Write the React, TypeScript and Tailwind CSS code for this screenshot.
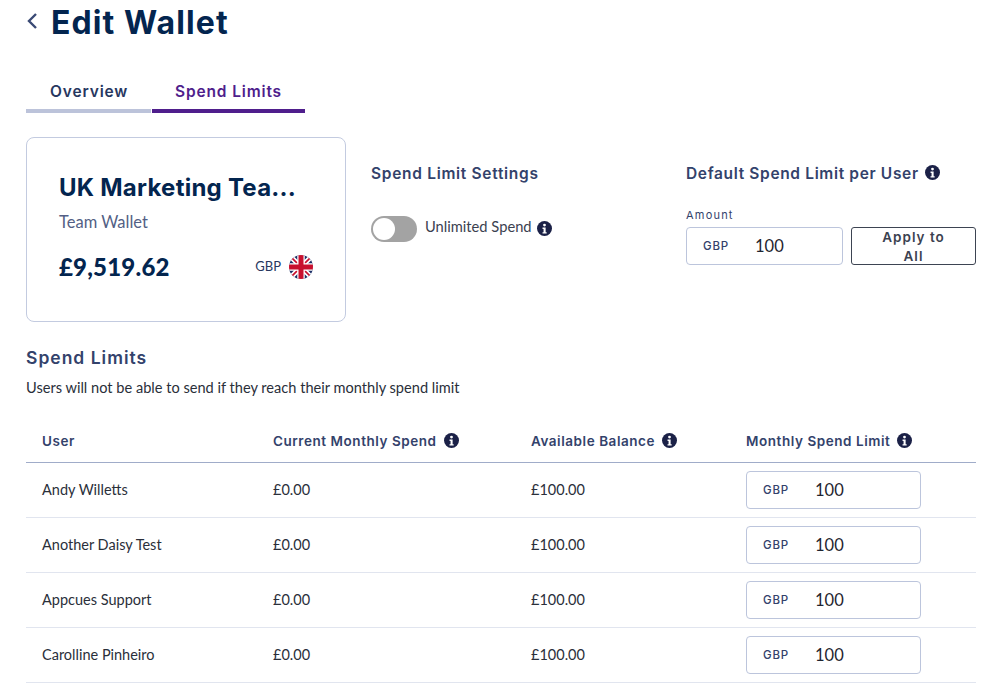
import React from 'react';

const users = ['Andy Willetts', 'Another Daisy Test', 'Appcues Support', 'Carolline Pinheiro'];

const InfoIcon = ({ className }: { className?: string }) => (
  <svg viewBox="0 0 16 16" className={className}>
    <circle cx="8" cy="8" r="8" fill="#1b2147" />
    <circle cx="8" cy="4.3" r="1.5" fill="#fff" />
    <path d="M5.9 7h3.3v5h1.1v1.4H5.9V12H7V8.4H5.9z" fill="#fff" />
  </svg>
);

const UkFlag = () => (
  <svg viewBox="0 0 24 24" className="w-6 h-6">
    <defs>
      <clipPath id="flag-circle">
        <circle cx="12" cy="12" r="12" />
      </clipPath>
    </defs>
    <g clipPath="url(#flag-circle)">
      <rect width="24" height="24" fill="#1c2f66" />
      <path d="M0 0L24 24M24 0L0 24" stroke="#fff" strokeWidth="5" />
      <path d="M0 0L24 24M24 0L0 24" stroke="#c8102e" strokeWidth="1.6" />
      <path d="M12 0V24M0 12H24" stroke="#fff" strokeWidth="7.5" />
      <path d="M12 0V24M0 12H24" stroke="#c8102e" strokeWidth="5" />
    </g>
  </svg>
);

const LimitInput = ({ className, labelClass }: { className: string; labelClass: string }) => (
  <div className={`flex items-center border border-[#bcc5dc] rounded-[4px] bg-white ${className}`}>
    <span className={`pt-[2px] font-['Inter',sans-serif] text-[11.5px] tracking-[0.8px] font-medium text-[#33426b] ${labelClass}`}>GBP</span>
    <span className="text-[16.5px] text-[#1f2530]">100</span>
  </div>
);

const HeaderCell = ({ label, info, className }: { label: string; info?: boolean; className: string }) => (
  <div className={`flex items-center gap-[7px] font-['Inter',sans-serif] text-[13.5px] font-semibold tracking-[0.55px] text-[#33426b] ${className}`}>
    <span className="pt-[2px]">{label}</span>
    {info && <InfoIcon className="w-[15px] h-[15px] -mt-[1px]" />}
  </div>
);

export default function App() {
  return (
    <div className="h-[690px] overflow-hidden bg-white pl-[26px] pr-[17px] font-['Lato',sans-serif]">
      <div className="flex items-center h-[44px]">
        <svg viewBox="0 0 12 18" className="w-[12px] h-[18px] -mt-[3px]" fill="none" stroke="#3a4a75" strokeWidth="2.400">
          <path d="M10 2L3 9l7 7" />
        </svg>
        <h1 className="ml-[13px] pt-[2px] font-['Inter',sans-serif] text-[32px] font-bold tracking-[1.1px] text-[#03254f]">Edit Wallet</h1>
      </div>

      <div className="flex mt-[36px] font-['Inter',sans-serif] text-[15.5px] font-semibold tracking-[0.85px]">
        <div className="w-[125px] h-[33px] pl-[24px] pt-[1px] border-b-4 border-[#bcc3da] text-[#27375f] leading-[22px]">Overview</div>
        <div className="w-[153px] ml-px h-[33px] pt-[1px] text-center border-b-4 border-[#4f1e8c] text-[#4f1e8c] leading-[22px]">Spend Limits</div>
      </div>

      <div className="flex mt-[24px] h-[185px]">
        <div className="w-[320px] border border-[#c3cbe0] rounded-[8px] pt-[34px] pl-[32px] pr-[31px]">
          <div className="font-['Inter',sans-serif] text-[24px] font-bold tracking-[0.25px] leading-[32px] text-[#03254f] whitespace-nowrap">UK Marketing Tea...</div>
          <div className="mt-[8px] text-[16.5px] leading-[20px] text-[#535f85]">Team Wallet</div>
          <div className="flex items-center justify-between mt-[17px]">
            <span className="text-[24px] font-black tracking-[0.2px] text-[#03254f]">£9,519.62</span>
            <div className="flex items-center gap-[8px] pr-[1px]">
              <span className="text-[13px] text-[#27375f]">GBP</span>
              <UkFlag />
            </div>
          </div>
        </div>

        <div className="w-[315px] ml-[25px] pt-[26px]">
          <h2 className="font-['Inter',sans-serif] text-[15.5px] font-semibold tracking-[0.7px] leading-[22px] text-[#33426b]">Spend Limit Settings</h2>
          <div className="flex items-center mt-[31px]">
            <div className="w-[46px] h-[26px] rounded-full bg-[#a3a3a3] p-[2px]">
              <div className="w-[22px] h-[22px] rounded-full bg-white" />
            </div>
            <span className="ml-[8px] -mt-[6px] text-[14.7px] text-[#3b4150]">Unlimited Spend</span>
            <InfoIcon className="ml-[5px] w-[15px] h-[15px] -mt-[2px]" />
          </div>
        </div>

        <div className="flex-1 pt-[26px]">
          <div className="flex items-center gap-[6px]">
            <h2 className="font-['Inter',sans-serif] text-[15.5px] font-semibold tracking-[0.65px] leading-[22px] text-[#33426b]">Default Spend Limit per User</h2>
            <InfoIcon className="w-[15px] h-[15px] -mt-[3px]" />
          </div>
          <div className="mt-[23px] font-['Inter',sans-serif] text-[11px] tracking-[1.2px] leading-[14px] text-[#33426b]">Amount</div>
          <div className="flex mt-[5px] gap-[8px]">
            <LimitInput className="w-[157px] h-[38px] pl-[16px]" labelClass="w-[52px]" />
            <button className="w-[125px] h-[38px] border border-[#3d4452] rounded-[3px] font-['Inter',sans-serif] text-[13.5px] font-semibold tracking-[1px] leading-[19px] text-[#3b4150]">
              Apply to<br />All
            </button>
          </div>
        </div>
      </div>

      <h2 className="mt-[25px] font-['Inter',sans-serif] text-[17.5px] font-semibold tracking-[1px] leading-[22px] text-[#33426b]">Spend Limits</h2>
      <p className="mt-[10px] text-[14.6px] leading-[18px] text-[#2a2f3a]">Users will not be able to send if they reach their monthly spend limit</p>

      <div className="flex items-center mt-[22px] h-[44px] pl-[16px] border-b border-[#a0acc9]">
        <HeaderCell label="User" className="w-[231px]" />
        <HeaderCell label="Current Monthly Spend" info className="w-[258px]" />
        <HeaderCell label="Available Balance" info className="w-[215px]" />
        <HeaderCell label="Monthly Spend Limit" info className="flex-1" />
      </div>

      {users.map(name => (
        <div key={name} className="flex items-center h-[55px] pl-[16px] border-b border-[#e1e5ef] text-[14.5px] text-[#2a2f3a]">
          <div className="w-[231px]">{name}</div>
          <div className="w-[258px]">£0.00</div>
          <div className="w-[215px]">£100.00</div>
          <LimitInput className="w-[175px] h-[38px] pl-[16px]" labelClass="w-[52px]" />
        </div>
      ))}
    </div>
  );
}
